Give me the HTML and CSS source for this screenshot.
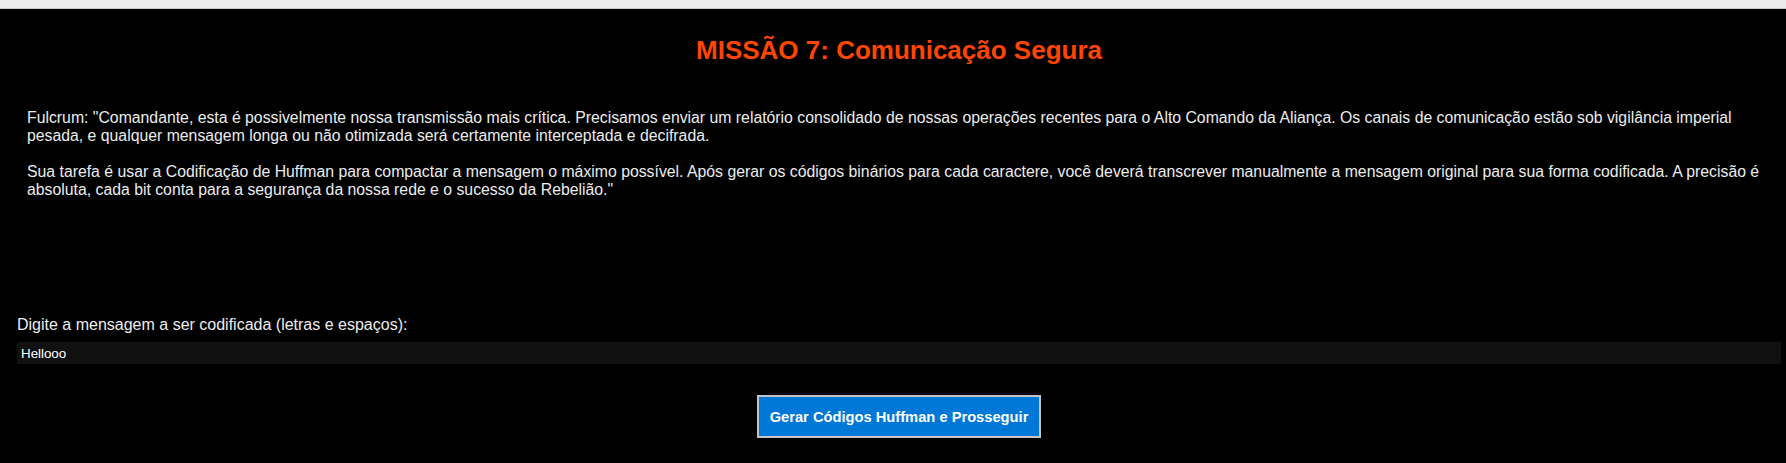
FILE: index.html
```html
<!DOCTYPE html>
<html lang="pt-BR">
<head>
<meta charset="utf-8">
<title>Missão 7</title>
<link rel="stylesheet" href="styles.css">
</head>
<body>
<div class="topbar"></div>
<main class="game">
  <h1 class="title">MISSÃO 7: Comunicação Segura</h1>
  <div class="story">
    <p>Fulcrum: "Comandante, esta é possivelmente nossa transmissão mais crítica. Precisamos enviar um relatório consolidado de nossas operações recentes para o Alto Comando da Aliança. Os canais de comunicação estão sob vigilância imperial pesada, e qualquer mensagem longa ou não otimizada será certamente interceptada e decifrada.</p>
    <p>Sua tarefa é usar a Codificação de Huffman para compactar a mensagem o máximo possível. Após gerar os códigos binários para cada caractere, você deverá transcrever manualmente a mensagem original para sua forma codificada. A precisão é absoluta, cada bit conta para a segurança da nossa rede e o sucesso da Rebelião."</p>
  </div>
  <label class="field-label" for="msg">Digite a mensagem a ser codificada (letras e espaços):</label>
  <input class="field-input" id="msg" type="text" value="Hellooo" autofocus>
  <div class="actions">
    <button class="btn" type="button">Gerar Códigos Huffman e Prosseguir</button>
  </div>
</main>
</body>
</html>
```

FILE: styles.css
```css
html, body {
  margin: 0;
  padding: 0;
  background: #000;
}

body {
  font-family: "Liberation Sans", Arial, sans-serif;
  color: #ececec;
  height: 463px;
  overflow: hidden;
}

.topbar {
  height: 8px;
  background: #ebebeb;
  border-bottom: 1px solid #c6c6c6;
}

.game {
  padding: 0 5px 0 17px;
}

.title {
  margin: 26px 0 0;
  font-size: 26px;
  font-weight: bold;
  color: #ff4500;
  text-align: center;
}

.story {
  box-sizing: border-box;
  margin-top: 33px;
  padding: 10px;
  min-height: 217px;
  font-size: 15.8px;
  line-height: 18px;
}

.story p {
  margin: 0 0 18px;
}

.field-label {
  display: block;
  font-size: 16px;
  margin-bottom: 8px;
}

.field-input {
  display: block;
  box-sizing: border-box;
  width: 100%;
  height: 22px;
  margin: 0;
  padding: 0 3px;
  border: 1px solid #111;
  background: #111;
  color: #fff;
  font-family: "Liberation Sans", Arial, sans-serif;
  font-size: 13.33px;
  caret-color: #fff;
}

.field-input:focus {
  outline: none;
}

.actions {
  display: flex;
  justify-content: center;
  margin-top: 31px;
}

.btn {
  box-sizing: border-box;
  height: 43px;
  padding: 0 11px;
  background: #0078d7;
  color: #fff;
  border: 2px solid #c4c4c4;
  border-radius: 0;
  font-family: "Liberation Sans", Arial, sans-serif;
  font-size: 14.7px;
  font-weight: bold;
  cursor: pointer;
}
```
